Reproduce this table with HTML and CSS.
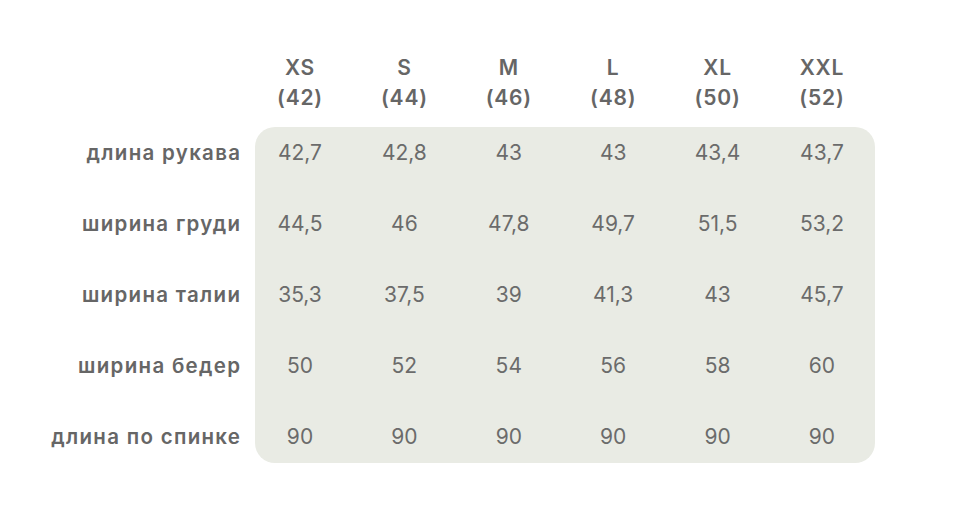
FILE: index.html
```html
<!DOCTYPE html>
<html lang="ru">
<head>
<meta charset="utf-8">
<link rel="stylesheet" href="styles.css">
</head>
<body>
<div class="table">
  <div class="head">
    <div class="cols">
      <div class="h">XS<br>(42)</div>
      <div class="h">S<br>(44)</div>
      <div class="h">M<br>(46)</div>
      <div class="h">L<br>(48)</div>
      <div class="h">XL<br>(50)</div>
      <div class="h">XXL<br>(52)</div>
    </div>
  </div>
  <div class="body">
    <div class="labels">
      <div class="lbl">длина рукава</div>
      <div class="lbl">ширина груди</div>
      <div class="lbl">ширина талии</div>
      <div class="lbl">ширина бедер</div>
      <div class="lbl">длина по спинке</div>
    </div>
    <div class="card">
      <div class="cols row"><span>42,7</span><span>42,8</span><span>43</span><span>43</span><span>43,4</span><span>43,7</span></div>
      <div class="cols row"><span>44,5</span><span>46</span><span>47,8</span><span>49,7</span><span>51,5</span><span>53,2</span></div>
      <div class="cols row"><span>35,3</span><span>37,5</span><span>39</span><span>41,3</span><span>43</span><span>45,7</span></div>
      <div class="cols row"><span>50</span><span>52</span><span>54</span><span>56</span><span>58</span><span>60</span></div>
      <div class="cols row"><span>90</span><span>90</span><span>90</span><span>90</span><span>90</span><span>90</span></div>
    </div>
  </div>
</div>
</body>
</html>
```
FILE: styles.css
```css
html, body { margin: 0; padding: 0; background: #fff; }
body { font-family: Inter, "Noto Sans", sans-serif; color: #666; }
.table { padding-top: 53px; }
.head { padding-left: 255px; }
.cols {
  display: grid;
  grid-template-columns: repeat(6, 80px);
  column-gap: 24.4px;
  padding-left: 5px;
}
.h {
  text-align: center;
  font-weight: 600;
  font-size: 21px;
  line-height: 30px;
  letter-spacing: 0.8px;
  color: #666;
}
.body {
  display: flex;
  gap: 15px;
  margin-top: 14px;
}
.labels {
  width: 240px;
  display: flex;
  flex-direction: column;
  gap: 19px;
}
.lbl {
  height: 52px;
  line-height: 52px;
  text-align: right;
  font-weight: 600;
  font-size: 20.5px;
  letter-spacing: 1.3px;
  margin-right: -1.3px;
  color: #666;
}
.card {
  width: 620px;
  background: #e9ebe4;
  border-radius: 20px;
  display: flex;
  flex-direction: column;
  gap: 19px;
}
.row { height: 52px; line-height: 52px; }
.row span {
  text-align: center;
  font-size: 21px;
  font-weight: 400;
  color: #6b6b6b;
}
```
